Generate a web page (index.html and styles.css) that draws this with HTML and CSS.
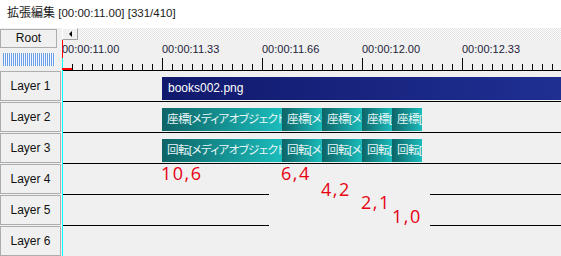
FILE: index.html
```html
<!DOCTYPE html>
<html>
<head>
  <title>拡張編集</title>
  <link rel="stylesheet" href="styles.css">
</head>
<body>
  <div class="title"><span class="title-name">拡張編集</span> [00:00:11.00] [331/410]</div>

  <div class="editor">
    <!-- layer buttons on the left -->
    <div class="side">
      <div class="root-row"><div class="root-btn">Root</div></div>
      <div class="meter"><div class="meter-bar"></div></div>
      <div class="layer-btn">Layer 1</div>
      <div class="layer-btn">Layer 2</div>
      <div class="layer-btn">Layer 3</div>
      <div class="layer-btn">Layer 4</div>
      <div class="layer-btn">Layer 5</div>
      <div class="layer-btn">Layer 6</div>
    </div>

    <!-- timeline -->
    <div class="main">
      <div class="scroll-row">
        <div class="scroll-btn"><span class="arrow-left"></span></div>
      </div>

      <div class="ruler">
        <div class="ruler-labels">
          <span>00:00:11.00</span>
          <span>00:00:11.33</span>
          <span>00:00:11.66</span>
          <span>00:00:12.00</span>
          <span>00:00:12.33</span>
        </div>
        <div class="ruler-ticks"></div>
      </div>

      <div class="track">
        <div class="clip clip-media">books002.png</div>
      </div>
      <div class="track">
        <div class="clip clip-filter w120">座標[メディアオブジェクト]</div>
        <div class="clip clip-filter w40">座標[メディアオブジェクト]</div>
        <div class="clip clip-filter w40">座標[メディアオブジェクト]</div>
        <div class="clip clip-filter w30">座標[メディアオブジェクト]</div>
        <div class="clip clip-filter w30">座標[メディアオブジェクト]</div>
      </div>
      <div class="track">
        <div class="clip clip-filter w120">回転[メディアオブジェクト]</div>
        <div class="clip clip-filter w40">回転[メディアオブジェクト]</div>
        <div class="clip clip-filter w40">回転[メディアオブジェクト]</div>
        <div class="clip clip-filter w30">回転[メディアオブジェクト]</div>
        <div class="clip clip-filter w30">回転[メディアオブジェクト]</div>
      </div>
      <div class="track"></div>
      <div class="track"></div>
      <div class="track"></div>

      <!-- current frame cursor -->
      <div class="cursor"></div>
      <div class="cursor-mark"></div>

      <!-- red notes drawn over the timeline -->
      <div class="note-mask"></div>
      <div class="note note-1">10,6</div>
      <div class="note note-2">6,4</div>
      <div class="note note-3">4,2</div>
      <div class="note note-4">2,1</div>
      <div class="note note-5">1,0</div>
    </div>
  </div>
</body>
</html>
```

FILE: styles.css
```css
/* AviUtl style timeline */
body {
  margin: 0;
  background-color: #f0f0f0;
  font-family: "Liberation Sans", "Noto Sans CJK JP", sans-serif;
  font-size: 12px;
  color: #111;
  overflow: hidden;
}

.title {
  height: 28px;
  box-sizing: border-box;
  padding: 5px 0 0 7px;
  background-color: #fff;
  font-size: 11.5px;
  line-height: 16px;
  color: #1a1a1a;
}

.title-name {
  font-size: 12px;
}

.editor {
  display: flex;
}

/* left column */
.side {
  width: 62px;
  flex-shrink: 0;
}

.root-row {
  height: 20px;
  box-sizing: border-box;
  padding-top: 1px;
}

.root-btn {
  width: 57px;
  height: 19px;
  box-sizing: border-box;
  border: 1px solid #adadad;
  background-color: #f0f0f0;
  text-align: center;
  line-height: 17px;
}

.meter {
  height: 23px;
  box-sizing: border-box;
  padding: 5px 0 0 3px;
}

.meter-bar {
  width: 52px;
  height: 13px;
  background: repeating-linear-gradient(to right, #6b9de6 0 1px, #f4f8ff 1px 2px);
}

.layer-btn {
  width: 61px;
  height: 30px;
  margin-bottom: 1px;
  box-sizing: border-box;
  border: 1px solid #adadad;
  background-color: #f0f0f0;
  text-align: center;
  line-height: 28px;
}

/* timeline */
.main {
  flex: 1;
  position: relative;
  min-width: 0;
}

.scroll-row {
  height: 12px;
  background: repeating-conic-gradient(#fbfbfb 0 25%, #e4e4e4 0 50%) 0 0 / 2px 2px;
}

.scroll-btn {
  width: 16px;
  height: 12px;
  box-sizing: border-box;
  border: 1px solid;
  border-color: #fff #a0a0a0 #a0a0a0 #fff;
  background-color: #f0f0f0;
  display: flex;
  align-items: center;
  justify-content: center;
}

.arrow-left {
  border-right: 3px solid #000;
  border-top: 3px solid transparent;
  border-bottom: 3px solid transparent;
}

.ruler {
  height: 31px;
  box-sizing: border-box;
  border-bottom: 1px solid #000;
}

.ruler-labels {
  display: flex;
  padding-top: 3px;
  font-size: 11px;
  line-height: 13px;
  color: #1c1c3a;
  white-space: nowrap;
}

.ruler-labels span {
  width: 100px;
  flex-shrink: 0;
}

.ruler-ticks {
  height: 12px;
  margin-top: 2px;
  background:
    repeating-linear-gradient(to right, #000 0 1px, transparent 1px 100px) 0 0 / 100% 12px no-repeat,
    repeating-linear-gradient(to right, #000 0 1px, transparent 1px 10px) 0 6px / 100% 6px no-repeat;
}

.track {
  height: 31px;
  box-sizing: border-box;
  border-bottom: 1px solid #000;
  display: flex;
  padding: 6px 0 1px 100px;
}

.clip {
  height: 23px;
  box-sizing: border-box;
  padding-left: 6px;
  line-height: 23px;
  white-space: nowrap;
  overflow: hidden;
  flex-shrink: 0;
  color: #fff;
}

.clip-media {
  flex: 1;
  background: linear-gradient(to right, #10196c, #1f2f92);
}

.clip-filter {
  padding-left: 5px;
  background: linear-gradient(to right, #0e6466, #1bbcbc);
  color: #e8f6f6;
  font-size: 11.5px;
  letter-spacing: -0.6px;
  font-feature-settings: "palt";
}

.w120 { width: 120px; }
.w40 { width: 40px; }
.w30 { width: 30px; }

.cursor {
  position: absolute;
  left: 0;
  top: 12px;
  bottom: 0;
  width: 1px;
  background: linear-gradient(#ff0000 0 18px, #00ffff 18px);
}

.cursor-mark {
  position: absolute;
  left: 0;
  top: 40px;
  width: 10px;
  height: 2px;
  background-color: #ff0000;
}

.note-mask {
  position: absolute;
  left: 207px;
  top: 158px;
  width: 161px;
  height: 44px;
  background-color: #f0f0f0;
}

.note {
  position: absolute;
  font-family: "Open Sans", sans-serif;
  font-size: 18px;
  font-weight: 500;
  line-height: 18px;
  letter-spacing: 1.5px;
  color: #e60012;
}

.note-1 { left: 99px; top: 136px; }
.note-2 { left: 219px; top: 136px; }
.note-3 { left: 259px; top: 152px; }
.note-4 { left: 299px; top: 165px; }
.note-5 { left: 330px; top: 179px; }
```
